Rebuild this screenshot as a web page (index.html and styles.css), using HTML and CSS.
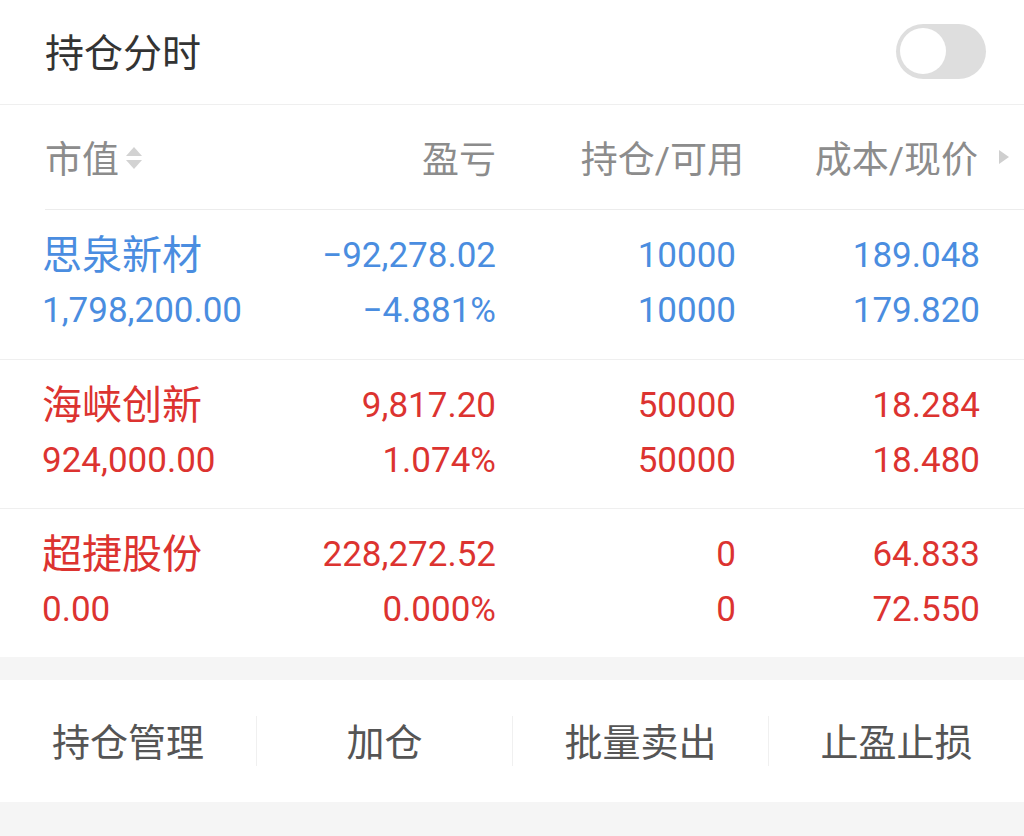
FILE: index.html
```html
<!DOCTYPE html>
<html lang="zh-CN">
    <head>
        <title>持仓分时</title>
        <meta charset="utf-8">
        <meta name="viewport" content="width=device-width, initial-scale=1.0">
        <link rel="stylesheet" href="styles.css">
    </head>
    <body>
        <section class="panel">
            <div class="top-bar">
                <h3>持仓分时</h3>
                <div class="switch"><span class="knob"></span></div>
            </div>

            <div class="thead">
                <div class="th th-left">市值
                    <svg class="sort" width="18" height="26" viewBox="0 0 18 26">
                        <path d="M9 2 L17 11 L1 11 Z" fill="#d2d2d2"/>
                        <path d="M9 24 L17 15 L1 15 Z" fill="#d2d2d2"/>
                    </svg>
                </div>
                <div class="th">盈亏</div>
                <div class="th">持仓/可用</div>
                <div class="th">成本/现价
                    <svg class="more" width="12" height="16" viewBox="0 0 12 16">
                        <path d="M1 1 L11 8 L1 15 Z" fill="#cfcfcf"/>
                    </svg>
                </div>
            </div>

            <div class="row blue">
                <div class="cell left"><span class="name">思泉新材</span><span>1,798,200.00</span></div>
                <div class="cell"><span>−92,278.02</span><span>−4.881%</span></div>
                <div class="cell"><span>10000</span><span>10000</span></div>
                <div class="cell"><span>189.048</span><span>179.820</span></div>
            </div>
            <div class="row red">
                <div class="cell left"><span class="name">海峡创新</span><span>924,000.00</span></div>
                <div class="cell"><span>9,817.20</span><span>1.074%</span></div>
                <div class="cell"><span>50000</span><span>50000</span></div>
                <div class="cell"><span>18.284</span><span>18.480</span></div>
            </div>
            <div class="row red">
                <div class="cell left"><span class="name">超捷股份</span><span>0.00</span></div>
                <div class="cell"><span>228,272.52</span><span>0.000%</span></div>
                <div class="cell"><span>0</span><span>0</span></div>
                <div class="cell"><span>64.833</span><span>72.550</span></div>
            </div>
        </section>

        <nav class="actions">
            <div class="action">持仓管理</div>
            <div class="action">加仓</div>
            <div class="action">批量卖出</div>
            <div class="action">止盈止损</div>
        </nav>
    </body>
</html>
```

FILE: styles.css
```css
* {
    margin: 0;
    padding: 0;
    box-sizing: border-box;
}
body {
    width: 1024px;
    min-height: 836px;
    background-color: #f5f5f5;
    font-family: Roboto, "Noto Sans CJK SC", sans-serif;
}
.panel {
    background-color: white;
}
.top-bar {
    height: 105px;
    display: flex;
    justify-content: space-between;
    align-items: center;
    padding: 0 38px 0 45px;
    border-bottom: 1px solid #efefef;
}
h3 {
    font-size: 39px;
    font-weight: 400;
    color: #333;
    margin-top: -4px;
}
.switch {
    width: 90px;
    height: 55px;
    border-radius: 28px;
    background-color: #dedede;
    padding: 4px;
    margin-top: -2px;
}
.knob {
    display: block;
    width: 46px;
    height: 46px;
    border-radius: 50%;
    background-color: white;
}
.thead {
    height: 105px;
    margin-left: 45px;
    padding-right: 14px;
    display: grid;
    grid-template-columns: 227px 224px 248px 266px;
    align-items: center;
    border-bottom: 1px solid #ececec;
}
.th {
    display: flex;
    justify-content: flex-end;
    align-items: center;
    font-size: 37px;
    color: #8c8c8c;
}
.th-left {
    justify-content: flex-start;
}
.sort {
    margin-left: 6px;
    margin-top: 2px;
}
.more {
    margin-left: 20px;
}
.row {
    height: 149px;
    padding: 18px 44px 0 42px;
    display: grid;
    grid-template-columns: 230px 224px 240px 244px;
    border-top: 1px solid #efefef;
}
.thead + .row {
    border-top: none;
}
.cell {
    display: flex;
    flex-direction: column;
    align-items: flex-end;
    font-size: 35px;
    line-height: 55px;
    white-space: nowrap;
}
.cell.left {
    align-items: flex-start;
}
.name {
    font-size: 40px;
}
.blue {
    color: #4a8de0;
}
.red {
    color: #dc3330;
}
.actions {
    margin-top: 23px;
    height: 122px;
    background-color: white;
    display: grid;
    grid-template-columns: repeat(4, 1fr);
    align-items: center;
}
.action {
    text-align: center;
    font-size: 38px;
    color: #555;
    line-height: 46px;
    padding-top: 4px;
    border-left: 1px solid #f0f0f0;
}
.action:first-child {
    border-left: none;
}
```
